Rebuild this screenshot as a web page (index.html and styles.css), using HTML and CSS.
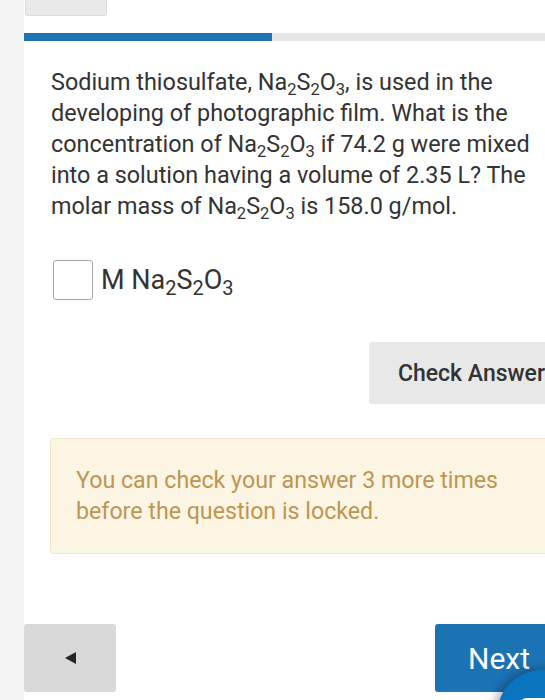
FILE: index.html
```html
<!DOCTYPE html>
<html>

<head>
    <title>Question</title>
    <link rel="stylesheet" href="styles.css">
</head>

<body>
    <div class="page">
        <div class="rail"></div>

        <div class="main">
            <div class="tab-btn"></div>

            <div class="progress">
                <div class="progress-fill" style="width: 44.3%"></div>
            </div>

            <p class="question">
                Sodium thiosulfate, Na<sub>2</sub>S<sub>2</sub>O<sub>3</sub>, is used in the<br>
                developing of photographic film. What is the<br>
                concentration of Na<sub>2</sub>S<sub>2</sub>O<sub>3</sub> if 74.2 g were mixed<br>
                into a solution having a volume of 2.35 L? The<br>
                molar mass of Na<sub>2</sub>S<sub>2</sub>O<sub>3</sub> is 158.0 g/mol.
            </p>

            <div class="answer-row">
                <input type="text" class="answer-box">
                <span class="unit">M Na<sub>2</sub>S<sub>2</sub>O<sub>3</sub></span>
            </div>

            <div class="check-row">
                <button class="check-btn">Check Answer</button>
            </div>

            <div class="notice">
                You can check your answer 3 more times<br>
                before the question is locked.
            </div>

            <div class="nav-row">
                <button class="back-btn"><span class="arrow-left"></span></button>
                <button class="next-btn">Next</button>
            </div>
        </div>
    </div>

    <!-- floating help button, mostly off screen -->
    <div class="fab"><div class="fab-inner"></div></div>
</body>

</html>
```

FILE: styles.css
```css
html,
body {
    margin: 0;
    padding: 0;
    overflow: hidden;
    background: #ffffff;
}

body {
    font-family: Roboto, "Liberation Sans", sans-serif;
    color: #333333;
    height: 700px;
}

.page {
    display: flex;
    height: 700px;
}

.rail {
    flex: none;
    width: 24px;
    background: #f4f4f4;
}

.main {
    flex: none;
    width: 560px;
}

.tab-btn {
    width: 82px;
    height: 46px;
    margin: -30px 0 0 1px;
    background: #e9e9e9;
    border: 1px solid #dcdcdc;
    border-radius: 3px;
    box-sizing: border-box;
}

.progress {
    height: 8px;
    margin-top: 17px;
    background: #e6e6e6;
}

.progress-fill {
    height: 100%;
    background: #1f75b3;
}

.question {
    margin: 26px 0 0 27px;
    white-space: nowrap;
    font-size: 23.4px;
    line-height: 31px;
}

sub {
    font-size: 16.5px;
    line-height: 0;
    vertical-align: -5px;
}

.answer-row {
    display: flex;
    align-items: center;
    gap: 8px;
    margin: 38px 0 0 29px;
}

.answer-box {
    width: 40px;
    height: 40px;
    margin: 0;
    box-sizing: border-box;
    border: 1px solid #a8a8a8;
    border-radius: 3px;
}

.unit {
    font-size: 27px;
    white-space: nowrap;
}

.unit sub {
    font-size: 20px;
    vertical-align: -6px;
}

.check-row {
    display: flex;
    margin: 42px 0 0 345px;
}

.check-btn {
    width: 200px;
    height: 62px;
    padding: 0 0 0 29px;
    text-align: left;
    white-space: nowrap;
    border: none;
    border-radius: 3px;
    background: #e8e8e8;
    color: #333333;
    font-family: Roboto, "Liberation Sans", sans-serif;
    font-size: 23px;
    font-weight: 500;
}

.notice {
    margin: 34px 0 0 26px;
    height: 116px;
    box-sizing: border-box;
    padding: 26px 25px;
    background: #fcf5e3;
    border: 1px solid #f3e6c6;
    border-radius: 4px;
    color: #bd9554;
    font-size: 23.2px;
    line-height: 31px;
    white-space: nowrap;
}

.nav-row {
    display: flex;
    justify-content: space-between;
    margin-top: 70px;
}

.back-btn {
    display: flex;
    align-items: center;
    justify-content: center;
    width: 92px;
    height: 68px;
    border: none;
    border-radius: 3px;
    background: #d9d9d9;
}

/* left pointing triangle */
.arrow-left {
    width: 0;
    height: 0;
    border-top: 6px solid transparent;
    border-bottom: 6px solid transparent;
    border-right: 11px solid #262626;
}

.next-btn {
    width: 130px;
    height: 68px;
    margin-right: 19px;
    padding: 0 0 0 33px;
    text-align: left;
    border: none;
    border-radius: 3px;
    background: #1c73b4;
    color: #ffffff;
    font-family: Roboto, "Liberation Sans", sans-serif;
    font-size: 30px;
}

.fab {
    position: absolute;
    left: 497px;
    top: 670px;
    width: 90px;
    height: 90px;
    border-radius: 50%;
    background: #0b74bf;
    box-shadow: -4px -2px 8px rgba(0, 0, 0, 0.25);
}

.fab-inner {
    position: absolute;
    left: 22px;
    top: 28px;
    width: 50px;
    height: 50px;
    border-radius: 8px;
    background: #ffffff;
}
```
